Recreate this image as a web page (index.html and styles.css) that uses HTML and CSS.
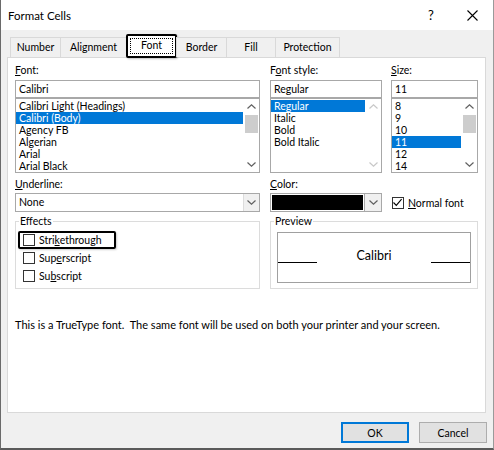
FILE: index.html
```html
<!DOCTYPE html>
<html>
<head>
<meta charset="utf-8">
<link rel="stylesheet" href="styles.css">
</head>
<body>
<div class="window">
  <div class="titlebar">
    <span class="title">Format Cells</span>
    <span class="help">?</span>
    <span class="close"><svg width="11" height="11" viewBox="0 0 11 11"><path d="M0.5 0.5 L10.5 10.5 M10.5 0.5 L0.5 10.5" stroke="#000" stroke-width="1.1" fill="none"/></svg></span>
  </div>
  <div class="tabs">
    <div class="tab t-number">Number</div>
    <div class="tab t-align">Alignment</div>
    <div class="tab t-font active"><span class="focus">Font</span></div>
    <div class="tab t-border">Border</div>
    <div class="tab t-fill">Fill</div>
    <div class="tab t-prot">Protection</div>
  </div>
  <div class="panel">
    <div class="grid">
      <div class="field c1">
        <div class="label"><u>F</u>ont:</div>
        <div class="input">Calibri</div>
        <div class="list">
          <div class="items">
            <div class="item">Calibri Light (Headings)</div>
            <div class="item sel">Calibri (Body)</div>
            <div class="item">Agency FB</div>
            <div class="item">Algerian</div>
            <div class="item">Arial</div>
            <div class="item">Arial Black</div>
          </div>
          <div class="sbar">
            <div class="arrow"><svg width="9" height="5" viewBox="0 0 9 5"><path d="M0.5 4.5 L4.5 0.8 L8.5 4.5" stroke="#606060" stroke-width="1.2" fill="none"/></svg></div>
            <div class="thumb"></div>
            <div class="track"></div>
            <div class="arrow"><svg width="9" height="5" viewBox="0 0 9 5"><path d="M0.5 0.5 L4.5 4.2 L8.5 0.5" stroke="#606060" stroke-width="1.2" fill="none"/></svg></div>
          </div>
        </div>
      </div>
      <div class="field c2">
        <div class="label">F<u>o</u>nt style:</div>
        <div class="input">Regular</div>
        <div class="list">
          <div class="items">
            <div class="item sel">Regular</div>
            <div class="item">Italic</div>
            <div class="item">Bold</div>
            <div class="item">Bold Italic</div>
          </div>
          <div class="sbar disabled">
            <div class="arrow"><svg width="9" height="5" viewBox="0 0 9 5"><path d="M0.5 4.5 L4.5 0.8 L8.5 4.5" stroke="#c8c8c8" stroke-width="1.2" fill="none"/></svg></div>
            <div class="track"></div>
            <div class="arrow"><svg width="9" height="5" viewBox="0 0 9 5"><path d="M0.5 0.5 L4.5 4.2 L8.5 0.5" stroke="#c8c8c8" stroke-width="1.2" fill="none"/></svg></div>
          </div>
        </div>
      </div>
      <div class="field c3">
        <div class="label"><u>S</u>ize:</div>
        <div class="input">11</div>
        <div class="list">
          <div class="items">
            <div class="item">8</div>
            <div class="item">9</div>
            <div class="item">10</div>
            <div class="item sel">11</div>
            <div class="item">12</div>
            <div class="item">14</div>
          </div>
          <div class="sbar">
            <div class="arrow"><svg width="9" height="5" viewBox="0 0 9 5"><path d="M0.5 4.5 L4.5 0.8 L8.5 4.5" stroke="#606060" stroke-width="1.2" fill="none"/></svg></div>
            <div class="thumb"></div>
            <div class="track"></div>
            <div class="arrow"><svg width="9" height="5" viewBox="0 0 9 5"><path d="M0.5 0.5 L4.5 4.2 L8.5 0.5" stroke="#606060" stroke-width="1.2" fill="none"/></svg></div>
          </div>
        </div>
      </div>

      <div class="field c1 row2">
        <div class="label"><u>U</u>nderline:</div>
        <div class="combo">
          <span class="combo-text">None</span>
          <span class="drop"><svg width="9" height="5" viewBox="0 0 9 5"><path d="M0.5 0.5 L4.5 4.2 L8.5 0.5" stroke="#606060" stroke-width="1.2" fill="none"/></svg></span>
        </div>
      </div>
      <div class="field c2 row2">
        <div class="label"><u>C</u>olor:</div>
        <div class="combo color">
          <span class="swatch"></span>
          <span class="drop"><svg width="9" height="5" viewBox="0 0 9 5"><path d="M0.5 0.5 L4.5 4.2 L8.5 0.5" stroke="#606060" stroke-width="1.2" fill="none"/></svg></span>
        </div>
      </div>
      <div class="c3 row2 normal">
        <span class="cb"><svg width="11" height="11" viewBox="0 0 11 11"><path d="M1.5 5.5 L4.3 8.4 L9.6 2.2" stroke="#000" stroke-width="1.1" fill="none"/></svg></span>
        <span><u>N</u>ormal font</span>
      </div>

      <fieldset class="group c1 row3 effects">
        <legend>Effects</legend>
        <div class="check focused"><span class="cb"></span><span>Stri<u>k</u>ethrough</span></div>
        <div class="check"><span class="cb"></span><span>Sup<u>e</u>rscript</span></div>
        <div class="check"><span class="cb"></span><span>Su<u>b</u>script</span></div>
      </fieldset>
      <fieldset class="group row3 preview">
        <legend>Preview</legend>
        <div class="pv">
          <div class="pv-line"></div>
          <div class="pv-text">Calibri</div>
          <div class="pv-line"></div>
        </div>
      </fieldset>
    </div>
    <p class="note">This is a TrueType font.&nbsp; The same font will be used on both your printer and your screen.</p>
  </div>
  <div class="footer">
    <div class="btn ok">OK</div>
    <div class="btn">Cancel</div>
  </div>
</div>
</body>
</html>
```

FILE: styles.css
```css
html, body {
  margin: 0;
  padding: 0;
  background: #fff;
}
body {
  font-family: "Lato", "Noto Sans", sans-serif;
  font-size: 10.5px;
  color: #000;
}
.window {
  width: 494px;
  height: 450px;
  box-sizing: border-box;
  background: #f0f0f0;
  border-left: 1px solid #6a6a6a;
  border-right: 1px solid #9a9a9a;
  border-bottom: 2px solid #5a5a5a;
  display: flex;
  flex-direction: column;
}
.titlebar {
  height: 30px;
  background: #fff;
  display: flex;
  align-items: center;
  padding-left: 7px;
  font-size: 11.5px;
  flex: none;
}
.title { flex: 1; }
.help {
  width: 14px;
  margin-right: 29px;
  font-size: 13px;
  text-align: center;
}
.close {
  width: 11px;
  height: 11px;
  margin-right: 15px;
  display: flex;
}
.tabs {
  display: flex;
  align-items: flex-end;
  height: 27px;
  padding-left: 9px;
  flex: none;
  position: relative;
  z-index: 1;
}
.tab {
  height: 20px;
  box-sizing: border-box;
  border: 1px solid #d9d9d9;
  border-bottom: none;
  margin-right: -1px;
  display: flex;
  align-items: center;
  justify-content: center;
  background: #f0f0f0;
  padding-bottom: 1px;
}
.t-number { width: 51px; }
.t-align { width: 67px; }
.t-font { width: 51px; }
.t-border { width: 51px; }
.t-fill { width: 50px; }
.t-prot { width: 65px; }
.tab.active {
  height: 24px;
  background: #fff;
  border: 2px solid #000;
  border-radius: 2px;
  margin-bottom: -1px;
  padding: 2px;
  box-shadow: 1px 1px 2px rgba(0,0,0,0.25);
}
.focus {
  display: flex;
  align-items: center;
  justify-content: center;
  width: 100%;
  height: 100%;
  box-sizing: border-box;
  border: 1px dotted #000;
  padding-bottom: 3px;
}
.panel {
  margin: 0 7px 0 6px;
  height: 356px;
  box-sizing: border-box;
  background: #fff;
  border: 1px solid #d9d9d9;
  padding: 5px 7px 0 7px;
  flex: none;
}
.grid {
  display: grid;
  grid-template-columns: 245px 10px 112px 9px 87px;
  align-items: start;
}
.c1 { grid-column: 1; }
.c2 { grid-column: 3; }
.c3 { grid-column: 5; }
.label {
  height: 14px;
  line-height: 14px;
  margin-bottom: 3px;
}
.input {
  height: 18px;
  box-sizing: border-box;
  border: 1px solid #a8a8a8;
  line-height: 16px;
  padding-left: 3px;
}
.list {
  height: 75px;
  box-sizing: border-box;
  border: 1px solid #a8a8a8;
  display: flex;
}
.items {
  flex: 1;
  padding: 1px 1px 0 0;
}
.item {
  height: 12px;
  line-height: 12px;
  padding-left: 3px;
  white-space: nowrap;
}
.item.sel {
  background: #0078d7;
  color: #fff;
}
.sbar {
  width: 15px;
  display: flex;
  flex-direction: column;
  background: #fff;
}
.arrow {
  height: 15px;
  display: flex;
  align-items: center;
  justify-content: center;
  flex: none;
}
.thumb {
  height: 18px;
  margin: 1px 1px;
  background: #cdcdcd;
  flex: none;
}
.track { flex: 1; }
.row2 {
  grid-row: 2;
  margin-top: 4px;
}
.label + .combo { margin-top: -1px; }
.combo {
  height: 19px;
  box-sizing: border-box;
  border: 1px solid #a8a8a8;
  display: flex;
  align-items: stretch;
}
.combo-text {
  flex: 1;
  line-height: 17px;
  padding-left: 3px;
}
.drop {
  width: 15px;
  background: #f0f0f0;
  border-left: 1px solid #dcdcdc;
  display: flex;
  align-items: center;
  justify-content: center;
}
.combo.color {
  padding: 1px 0 1px 1px;
}
.swatch {
  width: 91px;
  background: #000;
}
.combo.color .drop {
  margin-left: auto;
  margin-top: -1px;
  margin-bottom: -1px;
  width: 16px;
  border-left: 1px solid #a8a8a8;
}
.normal {
  align-self: end;
  display: flex;
  align-items: center;
  gap: 4px;
  height: 19px;
  margin-left: 1px;
}
.cb {
  width: 12px;
  height: 12px;
  box-sizing: border-box;
  border: 1px solid #333;
  background: #fff;
  display: flex;
  flex: none;
}
.cb svg { margin: -1px 0 0 -1px; width: 11px; height: 11px; }
.row3 {
  grid-row: 3;
  margin-top: 3px;
}
.group {
  margin-left: 0;
  margin-right: 0;
  margin-bottom: 0;
  padding: 4px 0 1px 0;
  border: 1px solid #dcdcdc;
  min-width: 0;
  height: 74px;
  box-sizing: border-box;
}
.group legend {
  padding: 0 1px;
  margin-left: 3px;
  line-height: 12px;
}
.preview { grid-column: 3 / 6; padding-top: 5px; }
.check {
  width: 98px;
  height: 18px;
  box-sizing: border-box;
  border: 2px solid transparent;
  border-radius: 2px;
  margin-left: 2px;
  display: flex;
  align-items: center;
  gap: 4px;
  padding-left: 3px;
}
.check.focused {
  border-color: #000;
  box-shadow: 1px 1px 2px rgba(0,0,0,0.2);
}
.pv {
  margin: 0 6px 0 6px;
  height: 51px;
  box-sizing: border-box;
  border: 1px solid #a0a0a0;
  display: flex;
  align-items: flex-start;
}
.pv-line {
  width: 39px;
  height: 29px;
  border-bottom: 1px solid #000;
  flex: none;
}
.pv-text {
  flex: 1;
  text-align: center;
  font-size: 12.5px;
  line-height: 16px;
  padding-top: 15px;
}
.note {
  margin: 29px 0 0 0;
  line-height: 14px;
  font-size: 11px;
  white-space: nowrap;
}
.footer {
  display: flex;
  justify-content: flex-end;
  gap: 10px;
  padding: 9px 6px 0 0;
}
.btn {
  width: 68px;
  height: 21px;
  box-sizing: border-box;
  background: #e1e1e1;
  border: 1px solid #adadad;
  display: flex;
  align-items: center;
  justify-content: center;
}
.btn.ok {
  border: 2px solid #0078d7;
}
```
